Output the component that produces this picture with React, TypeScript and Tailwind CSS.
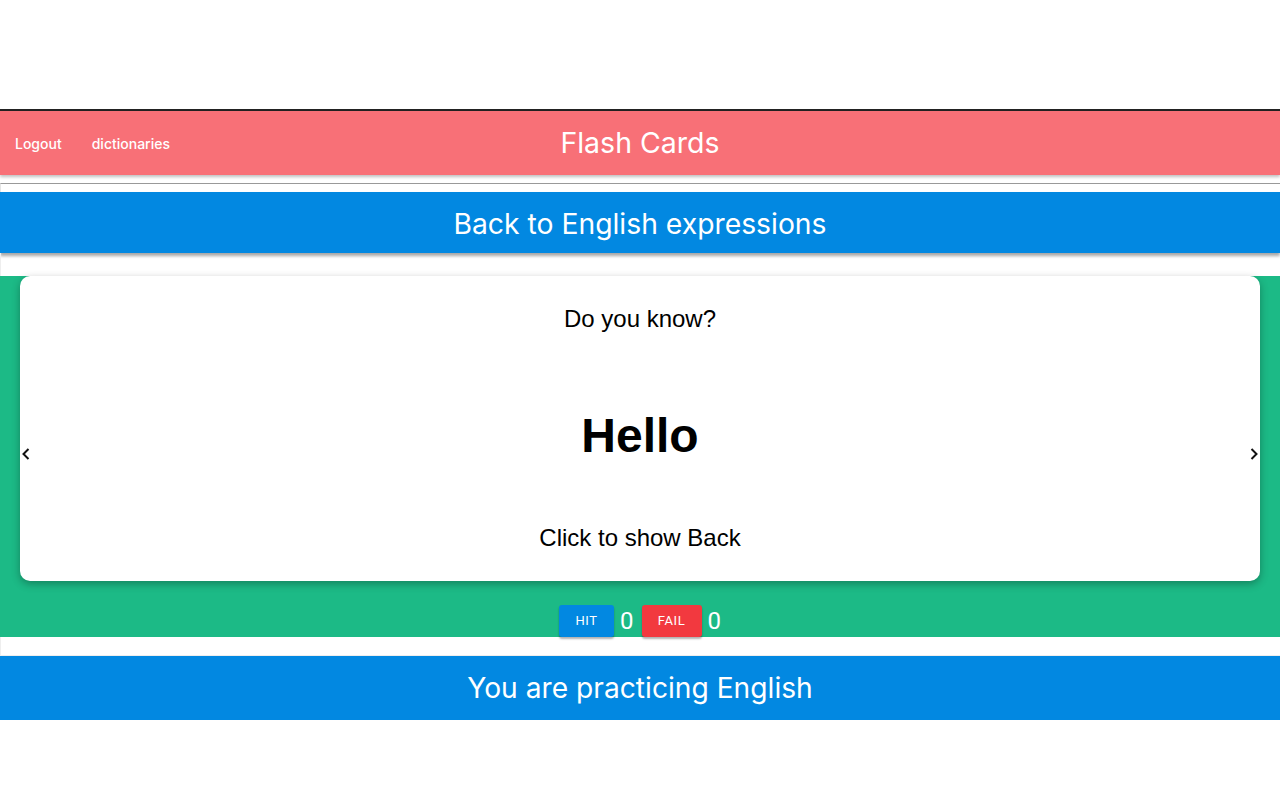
import React from 'react';

const sf = { fontFamily: 'Inter, "Noto Sans", sans-serif' };

function Chevron({ dir }: { dir: 'left' | 'right' }) {
  return (
    <svg width="10" height="14" viewBox="0 0 10 14" fill="none">
      <path
        d={dir === 'left' ? 'M7.5 2 L2.5 7 L7.5 12' : 'M2.5 2 L7.5 7 L2.5 12'}
        stroke="#111"
        strokeWidth="2"
      />
    </svg>
  );
}

export default function App() {
  return (
    <div className="min-h-screen bg-white" style={sf}>
      <div className="h-[109px]" />
      <div className="border-t-2 border-[#222]">
        <header className="relative h-[64px] bg-[#f87077] flex items-center shadow-[0_2px_3px_rgba(0,0,0,0.25)]">
          <nav className="flex items-center gap-[30px] pl-[15px] text-[14px] font-medium text-white z-10">
            <a href="#">Logout</a>
            <a href="#">dictionaries</a>
          </nav>
          <h1 className="absolute inset-0 flex items-center justify-center text-[28.5px] text-white">
            Flash Cards
          </h1>
        </header>
      </div>

      <div className="mt-[8px] h-[9px] border-t border-l border-[#999] border-l-[#e5e5e5]" />

      <div className="h-[61px] pt-[3px] bg-[#0288e1] flex items-center justify-center text-[28.3px] text-white shadow-[0_3px_3px_rgba(0,0,0,0.35)]">
        Back to English expressions
      </div>

      <div className="h-[23px] border-l border-[#eee]" />

      <section className="h-[361px] bg-[#1cba86]">
        <div
          className="relative mx-[20px] h-[305px] rounded-[10px] bg-white shadow-[0_3px_8px_rgba(0,0,0,0.3)] flex flex-col items-center text-black"
          style={{ fontFamily: '"Liberation Sans", Arial, sans-serif' }}
        >
          <p className="mt-[28px] text-[24px] leading-[30px]">Do you know?</p>
          <p className="mt-[74px] text-[48px] font-bold leading-[56px]">Hello</p>
          <p className="mt-[59px] text-[24px] leading-[30px]">Click to show Back</p>
          <button className="absolute left-[1px] top-[171px]">
            <Chevron dir="left" />
          </button>
          <button className="absolute right-[1px] top-[171px]">
            <Chevron dir="right" />
          </button>
        </div>

        <div
          className="mt-[24px] flex items-center justify-center gap-[6px] text-white"
          style={{ fontFamily: 'Roboto, sans-serif' }}
        >
          <button className="h-[32px] w-[55px] rounded-[3px] bg-[#0288e1] text-[13px] font-normal tracking-[0.6px] shadow-[0_2px_2px_rgba(0,0,0,0.3)]">
            HIT
          </button>
          <span className="text-[24px] leading-none">0</span>
          <button className="ml-[2px] h-[32px] w-[60px] rounded-[3px] bg-[#f2393f] text-[13px] font-normal tracking-[0.6px] shadow-[0_2px_2px_rgba(0,0,0,0.3)]">
            FAIL
          </button>
          <span className="text-[24px] leading-none">0</span>
        </div>
      </section>

      <div className="h-[19px] border-l border-b border-[#eee]" />

      <div className="h-[64px] bg-[#0288e1] flex items-center justify-center text-[28.2px] text-white">
        You are practicing English
      </div>
    </div>
  );
}
